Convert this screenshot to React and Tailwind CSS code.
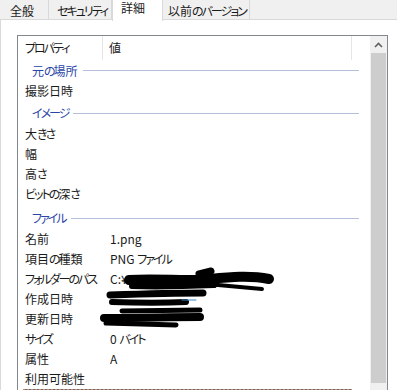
import React from 'react';

const groups = [
  { title: '元の場所', h: 'h-[21px]', pt: 'pt-0', rows: [['撮影日時', '']] },
  { title: 'イメージ', h: 'h-[23px]', pt: 'pt-[1px]', rows: [['大きさ', ''], ['幅', ''], ['高さ', ''], ['ビットの深さ', '']] },
  {
    title: 'ファイル',
    h: 'h-[25px]',
    pt: 'pt-[3px]',
    rows: [
      ['名前', '1.png'],
      ['項目の種類', 'PNG ファイル'],
      ['フォルダーのパス', 'C:¥'],
      ['作成日時', ''],
      ['更新日時', ''],
      ['サイズ', '0 バイト'],
      ['属性', 'A'],
      ['利用可能性', ''],
    ],
  },
];

const tabs = [
  { label: '全般', w: 'w-[49px]', pl: 'pl-[10px]' },
  { label: 'セキュリティ', w: 'w-[63px]', pl: 'pl-[8px]' },
  { label: '詳細', w: 'w-[51px]', pl: 'pl-[8px]', active: true },
  { label: '以前のバージョン', w: 'w-[87px]', pl: 'pl-[5px]' },
];

// kana in the UI font are set narrower than full width
const J = ({ t }) =>
  t.split(/([\u3040-\u30ff]+)/).map((s, i) =>
    /[\u3040-\u30ff]/.test(s) ? (
      <span key={i} className="tracking-[-2px]">{s}</span>
    ) : (
      <React.Fragment key={i}>{s}</React.Fragment>
    )
  );

const GroupRow = ({ title, h, pt }) => (
  <div className={`flex items-center ${h} ${pt} pl-[14px] pr-[11px]`}>
    <span className="text-[#2a45a6] whitespace-nowrap"><J t={title} /></span>
    <div className="flex-1 ml-[5px] h-px bg-[#b5bedb]" />
  </div>
);

const ItemRow = ({ label, value }) => (
  <div className="grid grid-cols-[86px_1fr] h-[20px] items-center">
    <span className="pl-[7px] whitespace-nowrap"><J t={label} /></span>
    <span className="pl-[6px] whitespace-nowrap"><J t={value} /></span>
  </div>
);

const Scribbles = () => (
  <svg
    className="absolute left-0 top-0 pointer-events-none"
    width="397"
    height="390"
    viewBox="0 0 397 390"
    fill="none"
    stroke="#000"
    strokeLinecap="round"
    strokeLinejoin="round"
  >
    {/* フォルダーのパス */}
    <path d="M129 280 C160 278 190 282 210 279 C230 277 250 275 269 279" strokeWidth="10" />
    <path d="M132 286 C160 287 190 286 214 285" strokeWidth="6" />
    <path d="M199 274 L211 271" strokeWidth="7" />
    <path d="M207 284 L262 289" strokeWidth="4" />
    {/* 作成日時 */}
    <path d="M110 295 C140 294 175 293 203 293" strokeWidth="7" />
    <path d="M112 302 C140 303 165 303 186 302" strokeWidth="6" />
    <path d="M182 300 L196 300" stroke="#3d86c6" strokeWidth="1" />
    {/* 更新日時 */}
    <path d="M122 311 L200 310" strokeWidth="5" />
    <path d="M104 318 C140 318 170 317 200 317" strokeWidth="8" />
    <path d="M106 323 L176 325" strokeWidth="5" />
  </svg>
);

export default function App() {
  return (
    <div className="relative w-[397px] h-[390px] overflow-hidden bg-white text-[12px] text-[#1a1a1a] leading-none font-['Noto_Sans_CJK_JP',sans-serif] [font-feature-settings:'palt']">
      {/* tab strip */}
      <div className="flex h-[20px] bg-[#f0f0f0] border-b border-[#d9d9d9]">
        {tabs.map((t) =>
          t.active ? (
            <div
              key={t.label}
              className={`${t.w} ${t.pl} h-[21px] bg-white border-x border-[#d9d9d9] flex items-start pt-[2px] relative z-10 whitespace-nowrap`}
            >
              <J t={t.label} />
            </div>
          ) : (
            <div
              key={t.label}
              className={`${t.w} ${t.pl} h-[20px] border-r border-[#d9d9d9] flex items-center pt-[1px] whitespace-nowrap`}
            >
              <J t={t.label} />
            </div>
          )
        )}
      </div>

      {/* tab page */}
      <div className="h-[370px] border-l border-[#d9d9d9] pl-[16px] pt-[15px]">
        <div className="flex w-[371px] h-[400px] border border-[#828790]">
          <div className="w-[352px] flex flex-col">
            <div className="flex h-[24px] items-center">
              <div className="w-[85px] h-full flex items-center pl-[7px] border-r border-[#e5e5e5]">
                <J t="プロパティ" />
              </div>
              <div className="w-[249px] h-full flex items-center pl-[6px] border-r border-[#e5e5e5]">値</div>
            </div>
            {groups.map((g) => (
              <React.Fragment key={g.title}>
                <GroupRow title={g.title} h={g.h} pt={g.pt} />
                {g.rows.map(([l, v]) => (
                  <ItemRow key={l} label={l} value={v} />
                ))}
              </React.Fragment>
            ))}
            <div className="ml-[5px] w-[329px] h-px bg-[repeating-linear-gradient(90deg,#e0893a_0_2px,#4a6fa5_2px_4px)]" />
          </div>

          {/* scrollbar */}
          <div className="w-[17px] bg-[#f0f0f0] flex flex-col">
            <div className="h-[17px] flex items-center justify-center">
              <svg width="9" height="6" viewBox="0 0 9 6">
                <path d="M1 5 L4.5 1.5 L8 5" fill="none" stroke="#606060" strokeWidth="1.6" />
              </svg>
            </div>
            <div className="mx-[1px] h-[330px] bg-[#cdcdcd]" />
          </div>
        </div>
      </div>

      <Scribbles />
    </div>
  );
}
